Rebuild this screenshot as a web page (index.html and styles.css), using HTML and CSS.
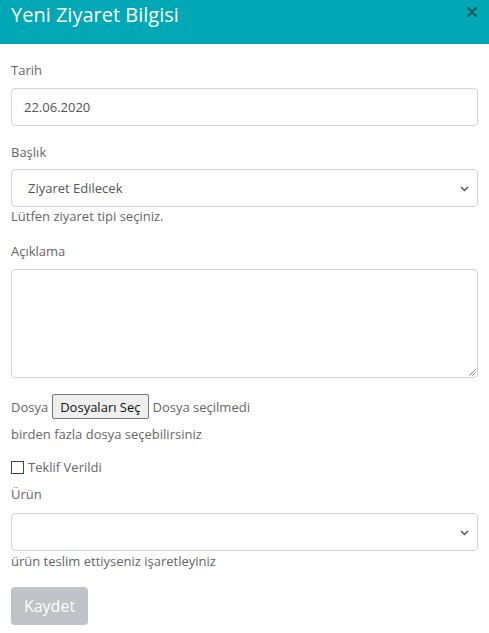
FILE: index.html
```html
<!DOCTYPE html>
<html lang="tr">
<head>
<meta charset="utf-8">
<link rel="stylesheet" href="styles.css">
</head>
<body>
<div class="modal">
  <div class="head">
    <h1 class="title">Yeni Ziyaret Bilgisi</h1>
    <span class="close"><svg width="10" height="10" viewBox="0 0 10 10"><path d="M1 1L9 9M9 1L1 9" stroke="#24555b" stroke-width="2.2" stroke-linecap="round"/></svg></span>
  </div>
  <div class="body">
    <label class="lbl l-tarih">Tarih</label>
    <div class="field input">22.06.2020</div>

    <label class="lbl l-baslik">Başlık</label>
    <div class="field select"><span>Ziyaret Edilecek</span><svg class="chev" width="9" height="6" viewBox="0 0 9 6"><path d="M1 1L4.5 4.5L8 1" fill="none" stroke="#555" stroke-width="1.5"/></svg></div>
    <div class="help h1">Lütfen ziyaret tipi seçiniz.</div>

    <label class="lbl l-acik">Açıklama</label>
    <div class="field textarea"><svg class="grip" width="8" height="8" viewBox="0 0 8 8"><path d="M7.5 1.5L1.5 7.5M7.5 4.5L4.5 7.5" stroke="#888" stroke-width="1"/></svg></div>

    <div class="filerow"><span>Dosya</span><span class="filebtn">Dosyaları Seç</span><span>Dosya seçilmedi</span></div>
    <div class="help h2">birden fazla dosya seçebilirsiniz</div>

    <div class="check"><span class="box"></span><span>Teklif Verildi</span></div>

    <label class="lbl l-urun">Ürün</label>
    <div class="field select"><span></span><svg class="chev" width="9" height="6" viewBox="0 0 9 6"><path d="M1 1L4.5 4.5L8 1" fill="none" stroke="#555" stroke-width="1.5"/></svg></div>
    <div class="help h3">ürün teslim ettiyseniz işaretleyiniz</div>

    <div class="btn">Kaydet</div>
  </div>
</div>
</body>
</html>
```
FILE: styles.css
```css
html, body { margin: 0; padding: 0; background: #fff; }
body { font-family: "Open Sans", sans-serif; font-size: 13px; color: #666; }
.modal { width: 489px; }
.head { height: 44px; background: #00a8b5; display: flex; justify-content: space-between; align-items: flex-start; padding: 0 11px; box-sizing: border-box; }
.title { margin: 0; font-size: 20px; font-weight: 400; line-height: 29px; color: #fff; }
.close { margin-top: 7px; margin-right: 1px; display: flex; }
.body { padding: 0 11px; display: flex; flex-direction: column; }
.lbl { display: block; line-height: 20px; }
.l-tarih { margin-top: 16px; margin-bottom: 8px; }
.l-baslik { margin-top: 16px; margin-bottom: 7px; }
.l-acik { margin-top: 16px; margin-bottom: 8px; }
.l-urun { margin-top: 8px; margin-bottom: 9px; }
.field { box-sizing: border-box; border: 1px solid #ced4da; border-radius: 4px; height: 38px; display: flex; align-items: center; color: #555; }
.input { padding-left: 12px; }
.select { padding-left: 16px; padding-right: 8px; justify-content: space-between; }
.chev { margin-top: 1px; }
.textarea { height: 109px; align-items: flex-end; justify-content: flex-end; padding: 1px; }
.help { line-height: 18px; }
.h1 { margin-top: 0; }
.h3 { margin-top: 1px; }
.filerow { display: flex; align-items: center; gap: 4px; margin-top: 16px; height: 25px; }
.filebtn { box-sizing: border-box; height: 25px; border: 1px solid #767676; border-radius: 2px; background: #efefef; color: #111; padding: 0 7px; display: flex; align-items: center; margin-left: 0; }
.h2 { margin-top: 6px; }
.check { display: flex; align-items: center; gap: 4px; margin-top: 15px; line-height: 18px; }
.box { box-sizing: border-box; width: 13px; height: 13px; border: 1px solid #444; background: #fff; }
.btn { margin-top: 17px; width: 77px; height: 38px; box-sizing: border-box; border-radius: 4px; background: #bfc3c7; color: #fff; font-size: 16px; display: flex; align-items: center; justify-content: center; }
```
